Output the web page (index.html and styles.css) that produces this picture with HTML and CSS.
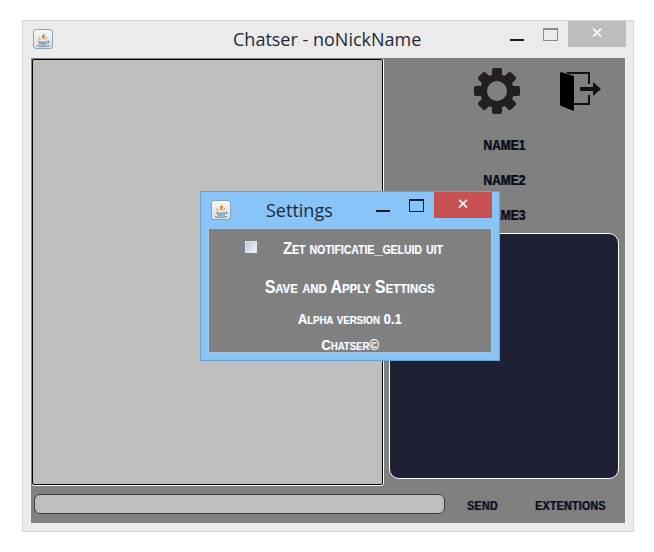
FILE: index.html
```html
<!DOCTYPE html>
<html lang="nl">
<head>
    <meta charset="UTF-8">
    <title>Chatser - noNickName</title>
    <link rel="stylesheet" href="styles.css">
</head>
<body>

    <div class="window">
        <div class="titlebar">
            <span class="java-icon">
                <svg width="20" height="20" viewBox="0 0 20 20">
                    <path d="M11 3c1 2-3 3.500-2 6 .3.800 1 1.500 1.500 2 -.5-1.500 3-3.500 1-6 .8 1.500-1.500 2-.5-2z" fill="#e8842c"/>
                    <path d="M6 8.500c-1 1 0 1.500 1.500 2M13.500 8c.5 1-.5 2-1.500 2.500" fill="none" stroke="#d9803a"/>
                    <path d="M5 12.500c2 1 8 1 10 0M6 14.500c2 .8 6 .8 8 0M15 12c1.500 0 1.500 1.500 0 2M4 16.500c3 1 9 1 12 0" fill="none" stroke="#5f7890"/>
                </svg>
            </span>
            <span class="main-title">Chatser - noNickName</span>
            <span class="minimize"></span>
            <span class="maximize"></span>
            <span class="close">&#10005;</span>
        </div>

        <div class="content">
            <div class="top-row">
                <div class="chat-log"></div>
                <div class="side">
                    <div class="side-icons">
                        <svg class="gear" width="46" height="46" viewBox="0 0 46 46">
                            <g fill="#231f20">
                                <rect x="18" y="0" width="10" height="46" rx="2"/>
                                <rect x="18" y="0" width="10" height="46" rx="2" transform="rotate(45 23 23)"/>
                                <rect x="18" y="0" width="10" height="46" rx="2" transform="rotate(90 23 23)"/>
                                <rect x="18" y="0" width="10" height="46" rx="2" transform="rotate(135 23 23)"/>
                            </g>
                            <circle cx="23" cy="23" r="13.500" fill="#808080" stroke="#231f20" stroke-width="7"/>
                        </svg>
                        <svg class="door" width="41" height="39" viewBox="0 0 41 39">
                            <path d="M0 1l1-1 13 4v35l-13-5-1-1z" fill="#000"/>
                            <path d="M6 0h24v12h-2v-10h-20zM28 23h2v10h-16v-2h14z" fill="#111"/>
                            <path d="M20 15h13v-5l8 7-8 7v-5h-13z" fill="#111"/>
                        </svg>
                    </div>
                    <div class="names">
                        <div class="name"><span class="name-text">Name1</span></div>
                        <div class="name"><span class="name-text">Name2</span></div>
                        <div class="name"><span class="name-text">Name3</span></div>
                    </div>
                    <div class="user-panel"></div>
                </div>
            </div>
            <div class="bottom-row">
                <div class="message-input"></div>
                <span class="action action-send">Send</span>
                <span class="action action-ext">Extentions</span>
            </div>
        </div>
    </div>

    <div class="dialog">
        <div class="dialog-titlebar">
            <span class="java-icon">
                <svg width="20" height="20" viewBox="0 0 20 20">
                    <path d="M11 3c1 2-3 3.500-2 6 .3.800 1 1.500 1.500 2 -.5-1.500 3-3.500 1-6 .8 1.500-1.500 2-.5-2z" fill="#e8842c"/>
                    <path d="M6 8.500c-1 1 0 1.500 1.500 2M13.500 8c.5 1-.5 2-1.500 2.500" fill="none" stroke="#d9803a"/>
                    <path d="M5 12.500c2 1 8 1 10 0M6 14.500c2 .8 6 .8 8 0M15 12c1.500 0 1.500 1.500 0 2M4 16.500c3 1 9 1 12 0" fill="none" stroke="#5f7890"/>
                </svg>
            </span>
            <span class="dialog-title">Settings</span>
            <span class="minimize dialog-minimize"></span>
            <span class="maximize dialog-maximize"></span>
            <span class="close dialog-close">&#10005;</span>
        </div>
        <div class="dialog-body">
            <div class="option-row">
                <span class="checkbox"></span>
                <span class="label option-label">Zet notificatie_geluid uit</span>
            </div>
            <div class="save-row"><span class="label save-label">Save and Apply Settings</span></div>
            <div class="small-row version"><span class="label">Alpha version 0.1</span></div>
            <div class="small-row copyright"><span class="label">Chatser©</span></div>
        </div>
    </div>

</body>
</html>
```

FILE: styles.css
```css
body {
    margin: 0;
    background-color: #fff;
    font-family: "Open Sans", sans-serif;
}
.window {
    box-sizing: border-box;
    width: 612px;
    height: 512px;
    margin: 20px 0 0 22px;
    background-color: #ebebeb;
    border: 1px solid #d4d4d4;
}
.titlebar {
    display: flex;
    height: 37px;
    position: relative;
}
.java-icon {
    box-sizing: border-box;
    width: 20px;
    height: 20px;
    margin: 8px 0 0 10px;
    border: 1px solid #8ba3b8;
    border-radius: 3px;
    background: linear-gradient(#f6f8fa, #d5dde5);
    display: block;
    overflow: hidden;
}
.java-icon svg {
    display: block;
    margin: -1px;
}
.main-title {
    margin: 6px 0 0 180px;
    width: 277px;
    font-size: 18px;
    line-height: 24px;
    color: #1f2a38;
    white-space: nowrap;
}
.minimize {
    width: 14px;
    height: 2px;
    margin-top: 18px;
    background-color: #1b1b1b;
    flex: none;
}
.maximize {
    box-sizing: border-box;
    width: 15px;
    height: 13px;
    margin: 7px 0 0 19px;
    border: 1px solid #8a8a8a;
    border-top-width: 2px;
    flex: none;
}
.close {
    position: absolute;
    right: 7px;
    top: 0;
    width: 58px;
    height: 26px;
    line-height: 25px;
    background-color: #bdbdbd;
    color: #fff;
    font-family: "DejaVu Sans", sans-serif;
    font-size: 15px;
    font-weight: bold;
    text-align: center;
}
.content {
    box-sizing: border-box;
    width: 594px;
    height: 465px;
    margin-left: 8px;
    padding: 1px 0 0 1px;
    background-color: #808080;
}
.top-row {
    display: flex;
    height: 427px;
}
.chat-log {
    box-sizing: border-box;
    width: 352px;
    height: 426px;
    background-color: #bebebe;
    border: 1px solid #000;
    border-radius: 2px;
    box-shadow: 0 1px 0 #fff, 1px 0 0 #fff;
}
.side {
    width: 236px;
    padding-left: 6px;
}
.side-icons {
    display: flex;
    align-items: center;
    height: 48px;
    margin-top: 8px;
}
.gear {
    margin-left: 85px;
}
.door {
    margin-left: 40px;
}
.names {
    height: 118px;
    padding-top: 12px;
    box-sizing: border-box;
}
.name {
    width: 229px;
    height: 35px;
    line-height: 35px;
    text-align: center;
    font-family: "Liberation Sans", sans-serif;
    font-size: 15px;
    font-weight: bold;
    text-transform: uppercase;
    color: #0b0b12;
}
/* no narrow face installed, so the wide one gets squeezed */
.name-text {
    display: inline-block;
    transform: scaleX(0.8);
    text-shadow: 1px 0 0 rgba(20, 20, 60, 0.6);
}
.user-panel {
    box-sizing: border-box;
    width: 230px;
    height: 246px;
    background-color: #1e2033;
    border: 1px solid #fff;
    border-radius: 10px;
}
.bottom-row {
    display: flex;
    align-items: center;
    height: 36px;
    padding-left: 2px;
}
.message-input {
    box-sizing: border-box;
    flex: none;
    width: 411px;
    height: 20px;
    background-color: #bebebe;
    border: 1px solid #3c3c3c;
    border-radius: 6px;
}
.action {
    font-family: "Liberation Sans", sans-serif;
    font-size: 13px;
    font-weight: bold;
    letter-spacing: 0.3px;
    text-transform: uppercase;
    color: #10101c;
    margin-top: 2px;
    white-space: nowrap;
    transform: scaleX(0.82);
    transform-origin: left center;
    text-shadow: 1px 0 0 rgba(20, 20, 60, 0.6);
}
.action-send {
    margin-left: 22px;
}
.action-ext {
    margin-left: 31px;
}
.dialog {
    position: absolute;
    left: 200px;
    top: 191px;
    box-sizing: border-box;
    width: 300px;
    height: 170px;
    background-color: #89c4f8;
    border: 1px solid #6f9fcb;
}
.dialog-titlebar {
    display: flex;
    height: 36px;
    position: relative;
}
.dialog-title {
    width: 110px;
    margin: 6px 0 0 35px;
    font-size: 18px;
    line-height: 24px;
    color: #1f2a38;
}
.dialog-minimize {
    margin-top: 18px;
}
.dialog-maximize {
    margin-top: 7px;
    border-color: #1b1b1b;
}
.dialog-close {
    background-color: #c75050;
}
.dialog-body {
    box-sizing: border-box;
    width: 284px;
    height: 125px;
    margin-left: 7px;
    background-color: #808080;
    border: 1px solid #a6c8e8;
    font-family: "Liberation Sans", sans-serif;
    font-weight: bold;
    font-variant: small-caps;
    color: #fff;
    text-align: center;
}
.label {
    display: inline-block;
    transform: scaleX(0.87);
    text-shadow: 1px 0 0 rgba(190, 205, 255, 0.4);
    white-space: nowrap;
}
.option-row {
    display: flex;
    align-items: center;
    height: 40px;
}
.checkbox {
    box-sizing: border-box;
    width: 12px;
    height: 12px;
    margin: 0 0 4px 36px;
    background: linear-gradient(135deg, #b8c8dc, #f2f5f9);
    border: 1px solid #dfe6ee;
}
.option-label {
    margin-left: 26px;
    font-size: 17px;
    transform-origin: left center;
}
.save-row {
    font-size: 18.300px;
    line-height: 18px;
    margin-top: 9px;
}
.small-row {
    font-size: 15px;
    line-height: 14px;
}
.version {
    margin-top: 16px;
}
.copyright {
    margin-top: 12px;
}
```
